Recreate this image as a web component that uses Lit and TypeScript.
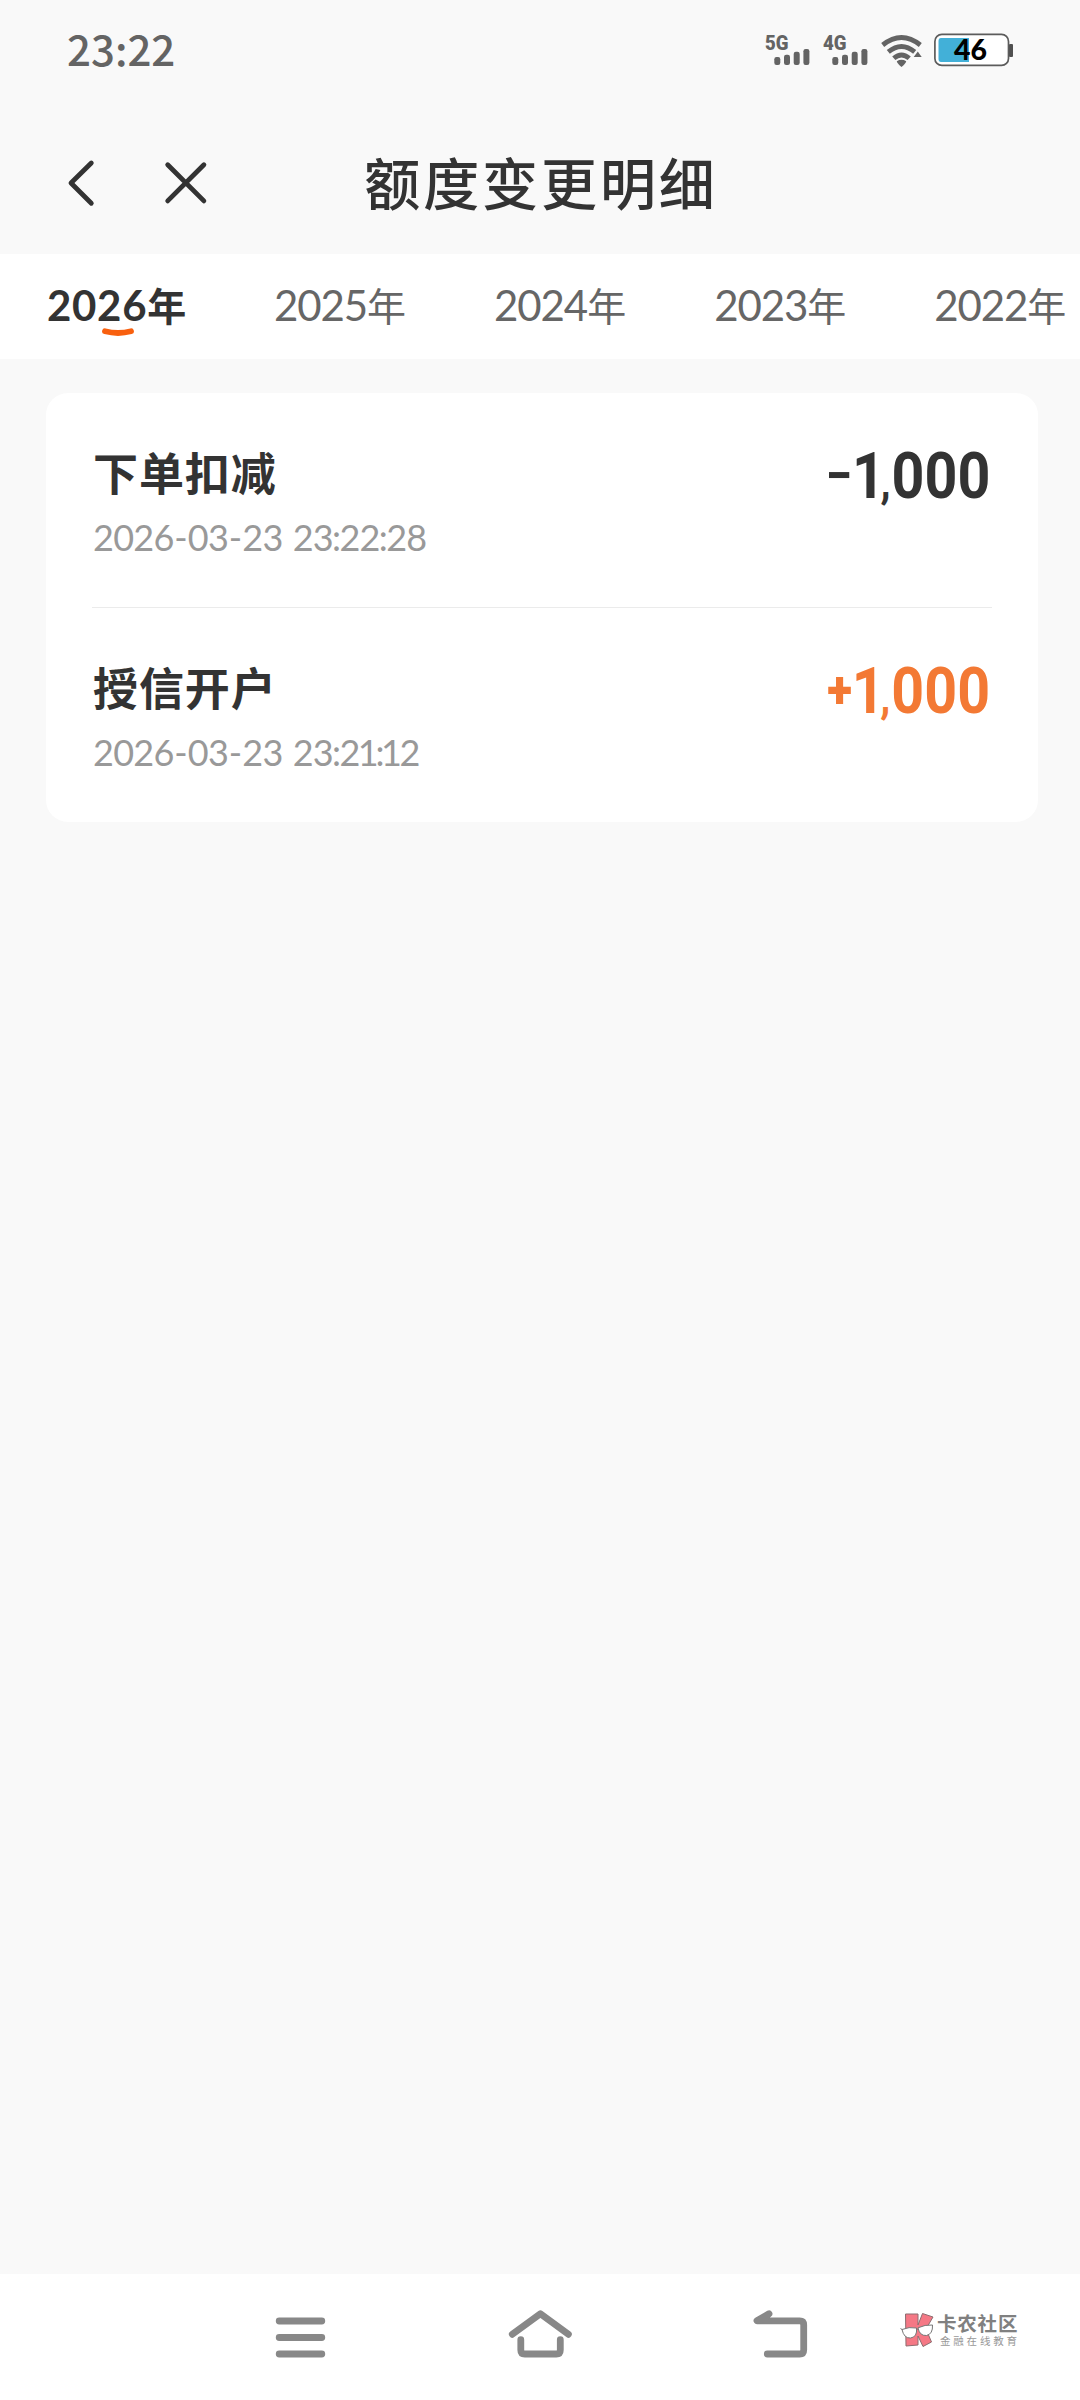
import { LitElement, css, html, svg } from "lit";
import { customElement, property, state } from "lit/decorators.js";
import { classMap } from "lit/directives/class-map.js";

interface QuotaRecord {
  name: string;
  time: string;
  sign: "-" | "+";
  amount: string;
}

@customElement("status-bar")
export class StatusBar extends LitElement {
  @property({ type: String })
  time = "";

  @property({ type: Number })
  battery = 0;

  private _signal(label: string) {
    return html`
      <svg class="signal" width="46" height="32" viewBox="0 0 46 32">
        <text class="net" x="0" y="16" textLength="23.5" lengthAdjust="spacingAndGlyphs">${label}</text>
        ${[8, 10.3, 13.3, 16].map(
          (h, i) =>
            svg`<rect x=${9.3 + i * 9.7} y=${31 - h} width="6" height=${h} rx="2.2" />`
        )}
      </svg>
    `;
  }

  render() {
    return html`
      <span class="time">${this.time}</span>
      ${this._signal("5G")}
      ${this._signal("4G")}
      <svg class="wifi" width="42" height="34" viewBox="0 0 42 34">
        <g fill="none" stroke="#646464" stroke-width="4.8">
          <path d="M1.7 11Q20.5 -4 39.3 11" />
          <path d="M7.3 17.8Q20.5 7 33.7 17.8" />
          <path d="M12.8 24.3Q20.5 17.5 28.2 24.3" />
        </g>
        <path d="M15.8 27.2Q20.5 24.4 25.2 27.2Q25.2 29 20.5 33Q15.8 29 15.8 27.2Z" />
        <path d="M36.8 17.6L40.7 23H32.7Z" />
      </svg>
      <svg class="battery" width="80" height="34" viewBox="0 0 80 34">
        <rect x="75" y="11" width="4" height="13" rx="1" fill="#505050" />
        <rect x="0.9" y="1.4" width="73.6" height="31" rx="7" fill="#fff" stroke="#5c5c5c" stroke-width="1.7" />
        <path d="M7 5H35V29H7Q4.5 29 4.5 26V8Q4.5 5 7 5Z" fill="#42b0d8" />
        <text class="level" x="20" y="27" textLength="33" lengthAdjust="spacingAndGlyphs">${this.battery}</text>
      </svg>
    `;
  }

  static styles = css`
    :host {
      display: flex;
      align-items: center;
      box-sizing: border-box;
      height: 112px;
      padding: 0 65px 12px 67px;
    }
    svg {
      fill: #646464;
      overflow: visible;
    }
    .time {
      margin: -4px auto 0 0;
      color: #646464;
      font: 500 42px/60px "Noto Sans CJK SC", sans-serif;
    }
    .signal {
      margin-right: 12px;
    }
    .net {
      font: 900 21px Roboto, sans-serif;
    }
    .wifi {
      margin: 2px 11px 0 0;
    }
    .battery {
      margin-right: 1px;
    }
    .level {
      fill: #000;
      font: 900 28px Lato, sans-serif;
    }
  `;
}

@customElement("year-tabs")
export class YearTabs extends LitElement {
  @property({ type: Array })
  years: number[] = [];

  @state()
  private _active = 0;

  render() {
    return this.years.map(
      (year, i) => html`
        <div
          class=${classMap({ tab: true, active: i === this._active })}
          @click=${() => (this._active = i)}
        >
          <span class="digits">${year}</span><span class="unit">年</span>
          ${i === this._active
            ? html`<svg class="smile" width="34" height="10" viewBox="0 0 34 10">
                <path d="M4 3.3Q17 6.7 30 3.3" />
              </svg>`
            : ""}
        </div>
      `
    );
  }

  static styles = css`
    :host {
      display: flex;
      align-items: center;
      box-sizing: border-box;
      height: 105px;
      padding: 0 0 5px 47px;
      background: #fff;
      overflow: hidden;
    }
    .tab {
      position: relative;
      display: flex;
      align-items: baseline;
      flex: none;
      width: 220.1px;
      color: #666;
      line-height: 60px;
    }
    .active {
      width: 227px;
      color: #333;
      font-weight: 700;
    }
    .digits {
      font-family: Lato, sans-serif;
      font-size: 42px;
      letter-spacing: -1.1px;
    }
    .active .digits {
      letter-spacing: 0.7px;
    }
    .unit {
      font-family: "Noto Sans CJK SC", sans-serif;
      font-size: 39px;
    }
    .smile {
      position: absolute;
      left: 54px;
      top: 54px;
      fill: none;
      stroke: #f8600f;
      stroke-width: 5.8;
      stroke-linecap: round;
    }
  `;
}

@customElement("record-row")
export class RecordRow extends LitElement {
  @property({ attribute: false })
  record!: QuotaRecord;

  // narrow or widen single glyphs so the timestamp is set proportionally
  private _glyph(char: string) {
    switch (char) {
      case "1":
        return html`<span class="one">1</span>`;
      case "-":
        return html`<span class="dash">-</span>`;
      case ":":
        return html`<span class="colon">:</span>`;
      case " ":
        return html`<span class="gap"> </span>`;
      default:
        return char;
    }
  }

  render() {
    const { name, time, sign, amount } = this.record;
    const [head, tail] = amount.split(",");
    return html`
      <div class="info">
        <div class="name">${name}</div>
        <div class="time">${[...time].map((char) => this._glyph(char))}</div>
      </div>
      <div class=${classMap({ amount: true, income: sign === "+" })}>
        <span class=${sign === "+" ? "plus" : "minus"}>${sign === "+" ? "+" : "−"}</span
        ><span class="head">${head}</span><span class="comma">,</span><span class="tail">${tail}</span>
      </div>
    `;
  }

  static styles = css`
    :host {
      display: flex;
      justify-content: space-between;
      box-sizing: border-box;
      height: 214px;
      padding: 45px 2px 0 1px;
    }
    .name {
      color: #333;
      font: 700 45px/68px "Noto Sans CJK SC", sans-serif;
      letter-spacing: 0.9px;
    }
    .time {
      margin-top: 7px;
      color: #999;
      font: 400 36px/48px Lato, sans-serif;
      letter-spacing: -0.75px;
      white-space: pre;
    }
    .one {
      margin: 0 -1.7px;
    }
    .dash {
      margin: 0 0.8px;
    }
    .colon {
      margin: 0 -0.9px;
    }
    .gap {
      margin-right: 1.6px;
    }
    .amount {
      display: flex;
      height: 76px;
      color: #333;
      font: 700 64.5px/76px Roboto, sans-serif;
      transform: scaleX(0.89);
      transform-origin: right;
    }
    .income {
      color: #f37934;
    }
    .plus,
    .minus {
      font-size: 54px;
    }
    .plus {
      font-size: 52px;
      font-weight: 900;
    }
    .head,
    .comma,
    .tail {
      align-self: baseline;
    }
    .head {
      margin-right: -5px;
    }
    .comma {
      margin-right: 1px;
      font-size: 46px;
    }
  `;
}

@customElement("system-nav")
export class SystemNav extends LitElement {
  render() {
    return html`
      <svg width="64" height="64" viewBox="0 0 64 64">
        <path d="M11.2 16H53.8M11.2 32.5H53.8M11.2 49H53.8" />
      </svg>
      <svg width="64" height="64" viewBox="0 0 64 64">
        <path d="M4.3 29.3L32.4 8.8L60.4 29.3" />
        <path d="M12.8 34.7V45Q12.8 49 16.8 49H48.3Q52.3 49 52.3 45V34.7" />
      </svg>
      <svg width="64" height="64" viewBox="0 0 64 64">
        <path d="M21 8.8L9 15.8H51.7Q55.7 15.8 55.7 19.8V45Q55.7 49 51.7 49H19.3" />
        <path d="M19 11L12 15" />
      </svg>
    `;
  }

  static styles = css`
    :host {
      display: grid;
      grid-template-columns: repeat(3, 240px);
      justify-content: center;
      place-items: center;
      height: 126px;
      background: #fff;
    }
    svg {
      fill: none;
      stroke: #888;
      stroke-width: 6.8;
      stroke-linecap: round;
      stroke-linejoin: round;
    }
  `;
}

@customElement("community-mark")
export class CommunityMark extends LitElement {
  render() {
    return html`
      <svg width="36" height="36" viewBox="0 0 36 36">
        <g fill="#f57885" stroke="#8d6d70" stroke-width="1">
          <path d="M5.5 2H18V13L22.5 1.5L33 5L26 17L31.5 30L23 34.5L18 24V33L6 34Z" />
        </g>
        <g fill="#fff" stroke="#777" stroke-width="1">
          <path d="M2 17.5Q9 14.5 16.5 16Q17.5 25 10.5 26Q4 26.5 2 17.5Z" />
          <path d="M18 15.8Q25 12.5 32.5 13Q33 22 26.5 23.5Q19.5 24 18 15.8Z" />
          <path d="M16.5 17.5L18 17M2 17.5L0.5 16.5" />
        </g>
      </svg>
      <div class="words">
        <div class="title">卡农社区</div>
        <div class="sub">金融在线教育</div>
      </div>
    `;
  }

  static styles = css`
    :host {
      display: flex;
      gap: 1px;
    }
    .words {
      display: flex;
      flex-direction: column;
      color: #808080;
      font-family: "Noto Sans CJK SC", sans-serif;
      white-space: nowrap;
    }
    .title {
      margin-top: 1px;
      font-size: 19.5px;
      font-weight: 700;
      line-height: 20px;
      letter-spacing: 0.8px;
    }
    .sub {
      margin: 1px 0 0 3px;
      color: #999;
      font-size: 10.5px;
      line-height: 13px;
      letter-spacing: 2.8px;
    }
  `;
}

@customElement("app-root")
export class AppRoot extends LitElement {
  @state()
  private _records: QuotaRecord[] = [
    { name: "下单扣减", time: "2026-03-23 23:22:28", sign: "-", amount: "1,000" },
    { name: "授信开户", time: "2026-03-23 23:21:12", sign: "+", amount: "1,000" },
  ];

  render() {
    return html`
      <status-bar time="23:22" battery="46"></status-bar>
      <header class="title-bar">
        <div class="actions">
          <svg width="30" height="48" viewBox="0 0 30 48">
            <path d="M24.3 4L4 24L24.3 44.3" />
          </svg>
          <svg width="44" height="44" viewBox="0 0 44 44">
            <path d="M3.7 3.7L39.9 39.9M39.9 3.7L3.7 39.9" />
          </svg>
        </div>
        <h1>额度变更明细</h1>
      </header>
      <year-tabs .years=${[2026, 2025, 2024, 2023, 2022]}></year-tabs>
      <main>
        <section class="card">
          ${this._records.map(
            (record) => html`<record-row class="row" .record=${record}></record-row>`
          )}
        </section>
      </main>
      <footer>
        <system-nav></system-nav>
        <community-mark class="mark"></community-mark>
      </footer>
    `;
  }

  static styles = css`
    :host {
      display: flex;
      flex-direction: column;
      width: 1080px;
      height: 2400px;
      background: #f9f9f9;
      overflow: hidden;
    }
    .title-bar {
      display: grid;
      grid-template-columns: 1fr auto 1fr;
      align-items: center;
      height: 142px;
    }
    .actions {
      display: flex;
      align-items: center;
      gap: 67px;
      padding-left: 67px;
    }
    .actions svg {
      fill: none;
      stroke: #333;
      stroke-width: 4.8;
      stroke-linecap: round;
      stroke-linejoin: round;
    }
    h1 {
      margin: 0;
      padding: 0 0 4px 2px;
      color: #333;
      font: 500 56px/80px "Noto Sans CJK SC", sans-serif;
      letter-spacing: 2.9px;
    }
    main {
      flex: 1;
      padding: 34px 42px 0 46px;
    }
    .card {
      padding: 0 46px;
      border-radius: 22px;
      background: #fff;
    }
    .row:not(:last-child) {
      height: 215px;
      border-bottom: 1px solid #ebebeb;
    }
    footer {
      position: relative;
    }
    .mark {
      position: absolute;
      left: 900px;
      top: 38px;
    }
  `;
}

declare global {
  interface HTMLElementTagNameMap {
    "status-bar": StatusBar;
    "year-tabs": YearTabs;
    "record-row": RecordRow;
    "system-nav": SystemNav;
    "community-mark": CommunityMark;
    "app-root": AppRoot;
  }
}
